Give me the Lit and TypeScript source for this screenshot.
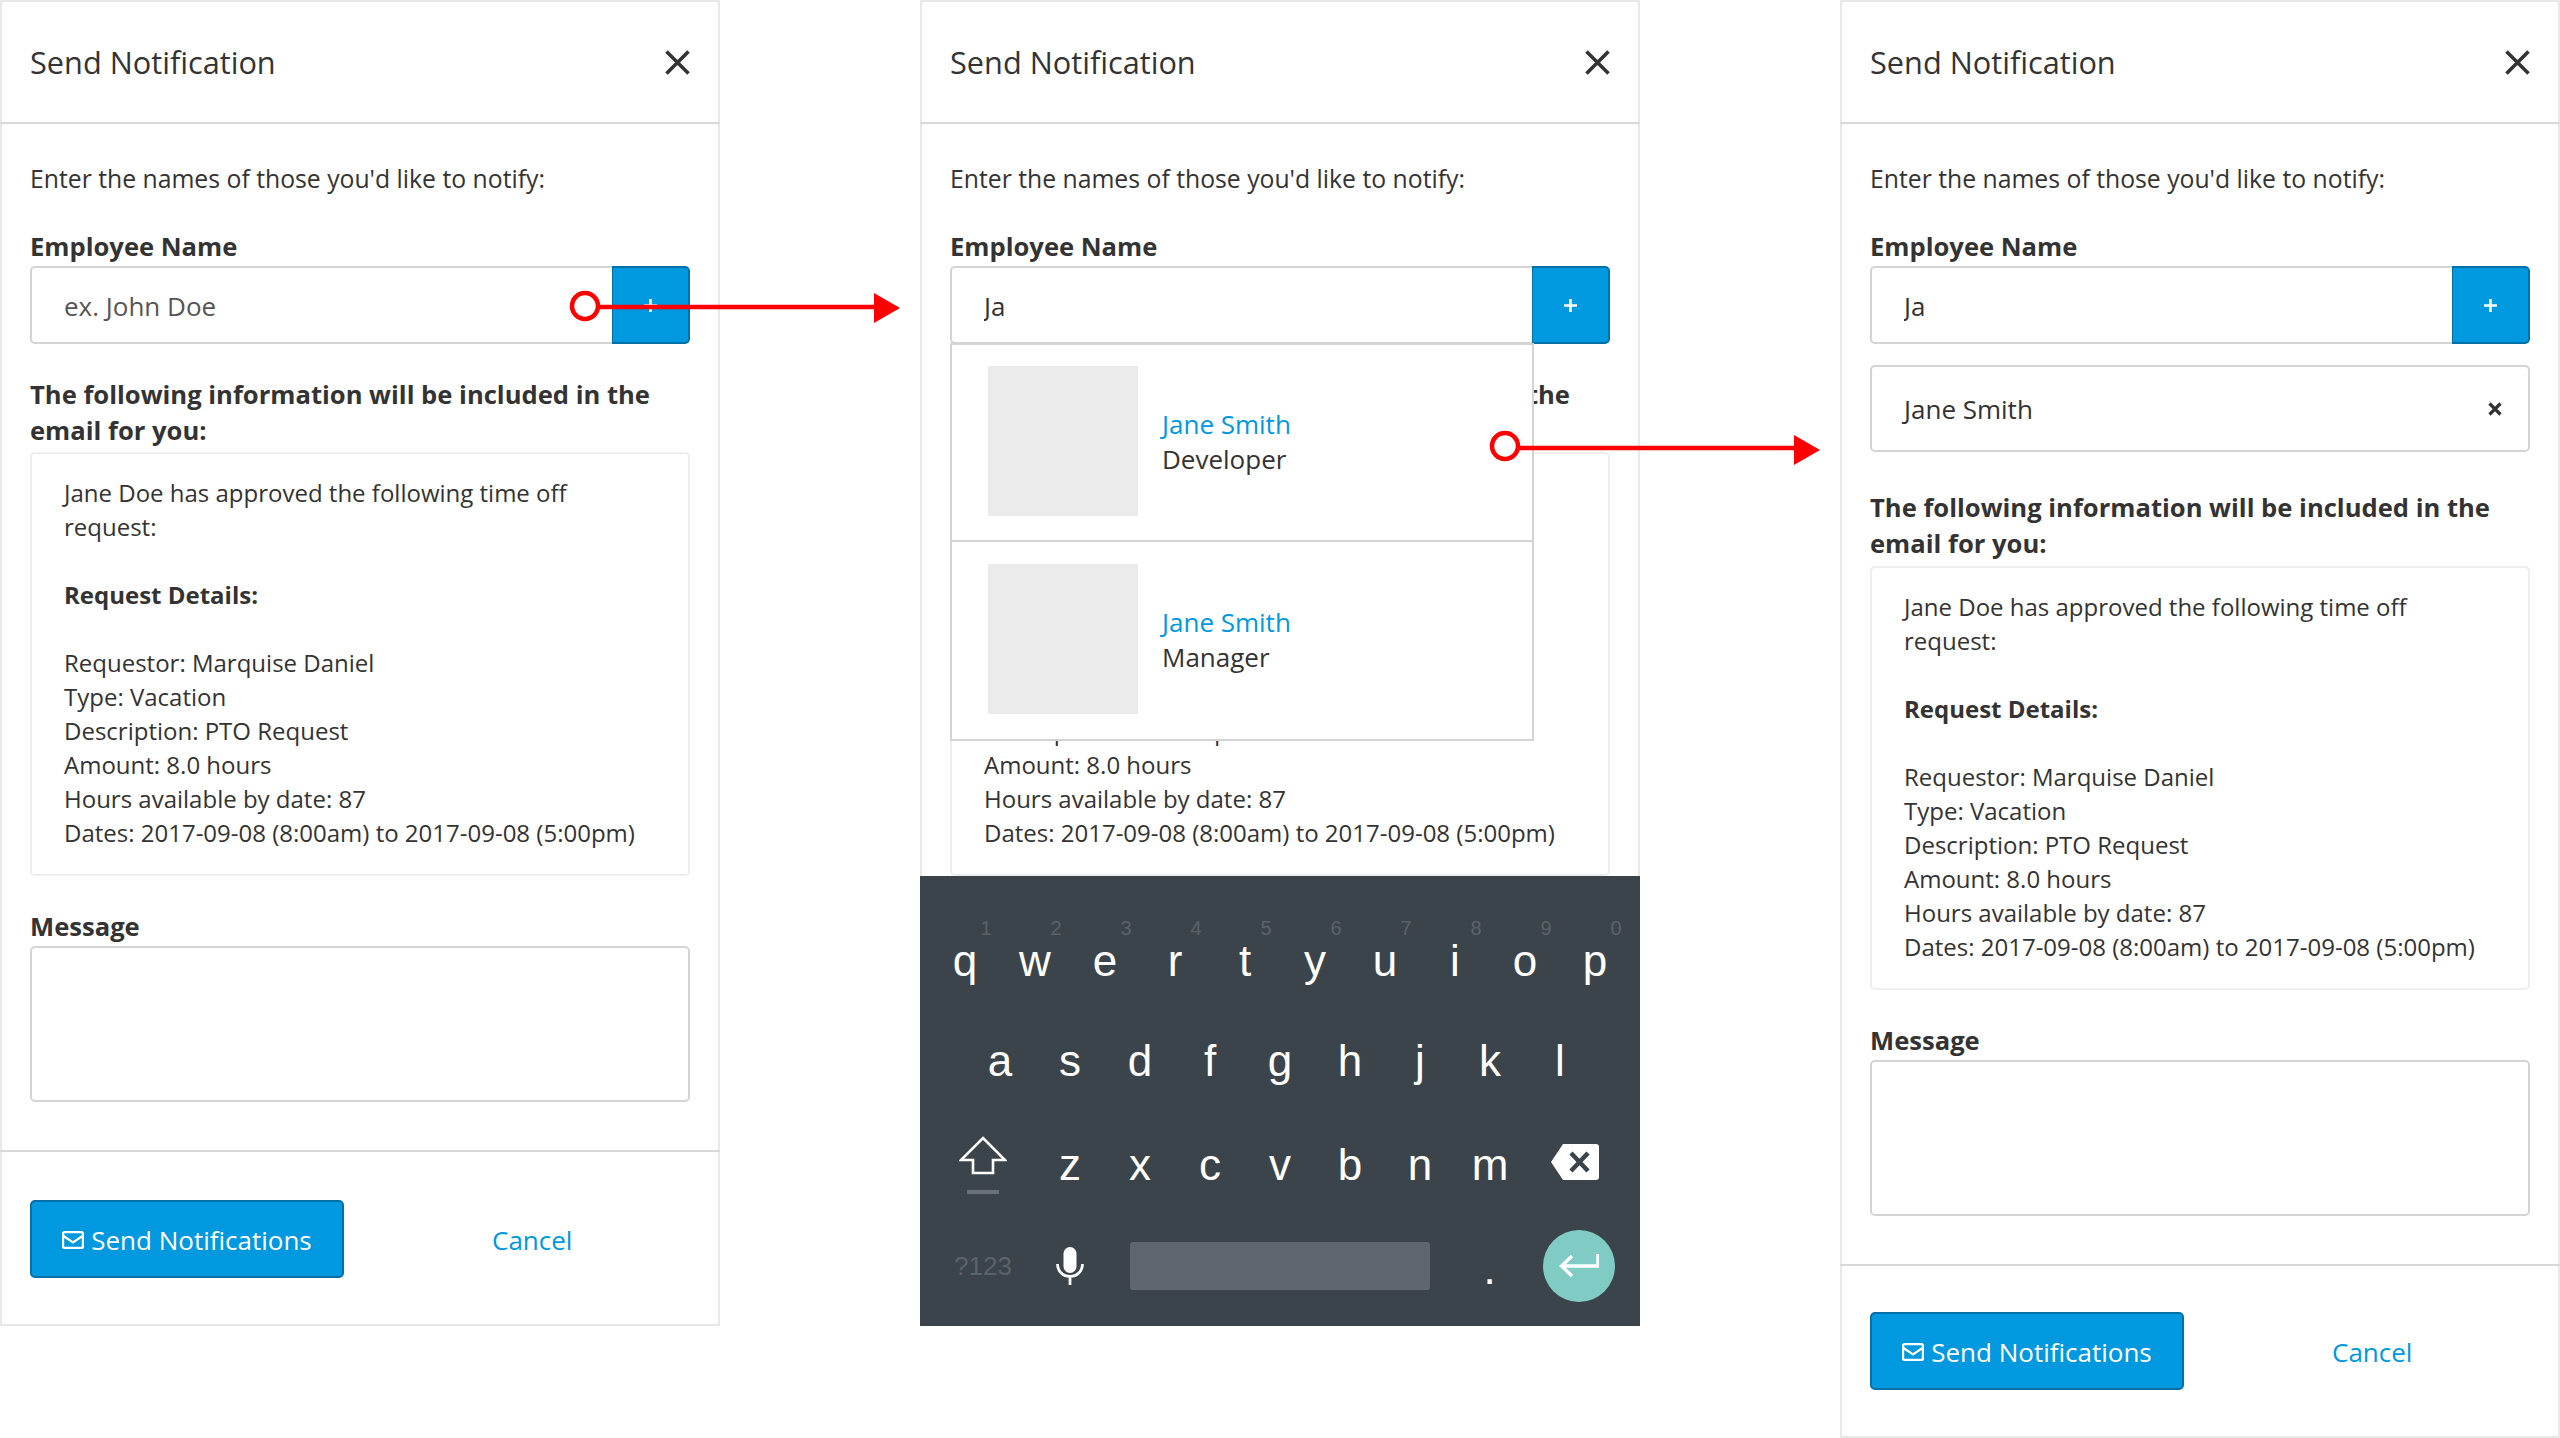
import { LitElement, html, css, svg } from "lit";
import { customElement, property } from "lit/decorators.js";

const FIRST = "qwertyuiop".split("");
const NUMS = "1234567890".split("");
const SECOND = "asdfghjkl".split("");
const THIRD = "zxcvbnm".split("");

@customElement("virtual-keyboard")
class VirtualKeyboard extends LitElement {
  static styles = css`
    :host { display: block; background: #3c444b; height: 450px; box-sizing: border-box; padding: 40px 10px 0; color: #fff; font-family: "Liberation Sans", Arial, sans-serif; }
    .row { display: flex; height: 98px; align-items: center; }
    .row.first { height: 94px; align-items: flex-start; }
    .row.second { height: 102px; padding-left: 35px; }
    .row.third { height: 105px; }
    .key { width: 70px; text-align: center; font-size: 44px; line-height: 50px; flex: none; }
    .first .key { position: relative; padding-top: 20px; }
    .num { position: absolute; top: 0; left: 21px; right: -21px; font-size: 20px; line-height: 24px; color: #5b6269; }
    .wide { width: 105px; display: flex; flex-direction: column; align-items: center; flex: none; }
    .shift-bar { width: 32px; height: 4px; background: #6b7279; margin-top: 15px; }
    .back { margin: -5px 0 0 -5px; }
    .sym { width: 106px; flex: none; text-align: center; font-size: 26px; color: #5b6269; }
    .mic { width: 68px; flex: none; display: flex; justify-content: center; }
    .space { width: 300px; height: 48px; margin-left: 26px; background: #5f666d; border-radius: 3px; flex: none; }
    .dot { width: 113px; flex: none; text-align: center; font-size: 44px; line-height: 50px; padding: 6px 0 0 6px; box-sizing: border-box; }
    .enter { width: 72px; height: 72px; border-radius: 50%; background: #80cbc4; display: flex; align-items: center; justify-content: center; flex: none; }
    svg { display: block; }
  `;
  render() {
    return html`
      <div class="row first">
        ${FIRST.map((k, i) => html`<div class="key"><span class="num">${NUMS[i]}</span>${k}</div>`)}
      </div>
      <div class="row second">${SECOND.map((k) => html`<div class="key">${k}</div>`)}</div>
      <div class="row third">
        <div class="wide">
          <svg width="48" height="39" viewBox="0 0 48 39"><path d="M24 2 46 24H34V37H14V24H2Z" fill="none" stroke="#fff" stroke-width="2.6"/></svg>
          <div class="shift-bar"></div>
        </div>
        ${THIRD.map((k) => html`<div class="key">${k}</div>`)}
        <div class="wide">
          <svg class="back" width="48" height="36" viewBox="0 0 48 36"><path d="M12 0H45a3 3 0 0 1 3 3V33a3 3 0 0 1-3 3H12L0 18Z" fill="#fff"/><path d="M20 9 37 27M37 9 20 27" stroke="#3c444b" stroke-width="4.5"/></svg>
        </div>
      </div>
      <div class="row">
        <div class="sym">?123</div>
        <div class="mic">
          <svg width="28" height="38" viewBox="0 0 28 38"><rect x="7.5" y="0" width="13" height="26" rx="6.5" fill="#fff"/><path d="M1.5 17C1.5 24.5 7 29.5 14 29.5S26.5 24.5 26.5 17M14 29.5V38" fill="none" stroke="#fff" stroke-width="2.8"/></svg>
        </div>
        <div class="space"></div>
        <div class="dot">.</div>
        <div class="enter">
          <svg width="40" height="24" viewBox="0 0 40 24"><path d="M39 0V12H3M13 2 2.500 12 13 22" fill="none" stroke="#fff" stroke-width="3.400"/></svg>
        </div>
      </div>
    `;
  }
}

@customElement("notify-panel")
class NotifyPanel extends LitElement {
  @property() value = "";
  @property({ type: Boolean }) suggest = false;
  @property({ type: Boolean }) keyboard = false;
  @property() chip = "";

  static styles = css`
    :host { display: block; width: 720px; box-sizing: border-box; flex: none; position: relative; border: 2px solid #e8e8e8; background: #fff; color: #333; font-family: "Open Sans", sans-serif; font-size: 26px; line-height: 34px; }
    * { box-sizing: border-box; }
    .header { height: 122px; border-bottom: 2px solid #d8d8d8; display: flex; align-items: center; justify-content: space-between; margin: 0 -2px; padding: 0 30px; }
    .title { font-size: 30.7px; }
    .body { padding: 38px 28px 48px; }
    .intro { margin-bottom: 34px; font-size: 24.75px; }
    .label { font-weight: 700; font-size: 25.6px; margin-bottom: 2px; }
    .group { display: flex; height: 78px; position: relative; }
    .input { flex: 1; border: 2px solid #d4d4d4; border-right: 0; border-radius: 5px 0 0 5px; padding: 2px 32px 0; font: inherit; color: #333; background: #fff; outline: none; min-width: 0; }
    .input::placeholder { color: #555; opacity: 1; }
    .add { width: 78px; flex: none; background: #0099e0; border: 2px solid #0071a8; border-left-width: 1px; border-radius: 0 5px 5px 0; display: flex; align-items: center; justify-content: center; padding: 0; }
    .chip { margin-top: 21px; height: 87px; border: 2px solid #d4d4d4; border-radius: 5px; display: flex; align-items: center; justify-content: space-between; padding: 0 26px 0 32px; }
    .heading { font-weight: 700; font-size: 25.6px; line-height: 36px; margin-top: 33px; }
    .chip + .heading { margin-top: 38px; }
    .details { margin-top: 3px; border: 2px solid #eee; border-radius: 5px; padding: 22px 32px; height: 424px; font-size: 24px; }
    .chip ~ .details { margin-top: 4px; }
    .details p { margin: 0; }
    .details b { font-weight: 700; }
    .msg { margin-top: 34px; }
    .area { display: block; margin: 0; width: 100%; height: 156px; border: 2px solid #d4d4d4; border-radius: 5px; background: #fff; resize: none; outline: none; }
    .footer { border-top: 2px solid #d8d8d8; margin: 0 -2px; padding: 48px 30px 46px; display: flex; align-items: center; }
    :host([chip]) .footer { padding-top: 46px; }
    .send { width: 314px; height: 78px; background: #0099e0; border: 2px solid #0071a8; border-radius: 5px; color: #fff; font: inherit; display: flex; align-items: center; justify-content: center; gap: 7px; padding: 2px 0 0; }
    .cancel { color: #0099e0; margin-left: 148px; padding-top: 2px; }
    .drop { position: absolute; left: 0; top: 77px; width: 584px; background: #fff; border: 2px solid #d4d4d4; z-index: 2; }
    .item { display: flex; align-items: center; gap: 24px; padding: 21px 36px 24px; }
    .item + .item { border-top: 2px solid #d4d4d4; padding: 22px 36px 25px; }
    .thumb { width: 150px; height: 150px; background: #ebebeb; flex: none; }
    .who { padding-top: 2px; }
    .name { color: #0099e0; display: block; line-height: 35px; }
    .role { display: block; line-height: 35px; }
    .kb { position: absolute; left: -2px; right: -2px; bottom: -2px; z-index: 3; }
    svg { display: block; }
  `;

  private plus() {
    return html`<svg width="13" height="13" viewBox="0 0 13 13"><path d="M6.500 0V13M0 6.500H13" stroke="#fff" stroke-width="2.600"/></svg>`;
  }

  render() {
    return html`
      <div class="header">
        <span class="title">Send Notification</span>
        <svg width="25" height="25" viewBox="0 0 25 25"><path d="M1.500 1.500 23.500 23.500M23.500 1.500 1.500 23.500" stroke="#333" stroke-width="3.600"/></svg>
      </div>
      <div class="body">
        <div class="intro">Enter the names of those you'd like to notify:</div>
        <div class="label">Employee Name</div>
        <div class="group">
          <input class="input" .value=${this.value} placeholder="ex. John Doe" />
          <button class="add">${this.plus()}</button>
          ${this.suggest
            ? html`<div class="drop">
                ${["Developer", "Manager"].map(
                  (r) => html`<div class="item"><div class="thumb"></div><div class="who"><span class="name">Jane Smith</span><span class="role">${r}</span></div></div>`
                )}
              </div>`
            : ""}
        </div>
        ${this.chip
          ? html`<div class="chip"><span>${this.chip}</span>
              <svg width="14" height="14" viewBox="0 0 14 14"><path d="M1.500 1.500 12.500 12.500M12.500 1.500 1.500 12.500" stroke="#333" stroke-width="3.200"/></svg></div>`
          : ""}
        <div class="heading">The following information will be included in the email for you:</div>
        <div class="details">
          <p>Jane Doe has approved the following time off request:</p>
          <p>&nbsp;</p>
          <p><b>Request Details:</b></p>
          <p>&nbsp;</p>
          <p>Requestor: Marquise Daniel</p>
          <p>Type: Vacation</p>
          <p>Description: PTO Request</p>
          <p>Amount: 8.0 hours</p>
          <p>Hours available by date: 87</p>
          <p>Dates: 2017-09-08 (8:00am) to 2017-09-08 (5:00pm)</p>
        </div>
        <div class="label msg">Message</div>
        <textarea class="area"></textarea>
      </div>
      <div class="footer">
        <button class="send">
          <svg width="22" height="18" viewBox="0 0 22 18"><rect x="1.100" y="1.100" width="19.800" height="15.800" rx="1.500" fill="none" stroke="#fff" stroke-width="2.200"/><path d="M1.500 5 11 11.500 20.500 5" fill="none" stroke="#fff" stroke-width="2.200"/></svg>
          <span>Send Notifications</span>
        </button>
        <span class="cancel">Cancel</span>
      </div>
      ${this.keyboard ? html`<virtual-keyboard class="kb"></virtual-keyboard>` : ""}
    `;
  }
}

@customElement("app-root")
class AppRoot extends LitElement {
  static styles = css`
    :host { display: block; width: 2560px; height: 1438px; position: relative; overflow: hidden; background: #fff; }
    .row { display: flex; gap: 200px; align-items: flex-start; }
    .overlay { position: absolute; left: 0; top: 0; z-index: 5; pointer-events: none; }
  `;
  private arrow(cx: number, cy: number, ly: number, tipStart: number, tipY: number) {
    return svg`
      <circle cx=${cx} cy=${cy} r="13" fill="none" stroke="#ff0000" stroke-width="4.500"/>
      <path d="M${cx + 13} ${ly}H${tipStart}" stroke="#ff0000" stroke-width="4.500"/>
      <path d="M${tipStart} ${tipY - 15}L${tipStart + 26} ${tipY}L${tipStart} ${tipY + 15}Z" fill="#ff0000"/>
    `;
  }
  render() {
    return html`
      <div class="row">
        <notify-panel></notify-panel>
        <notify-panel value="Ja" suggest keyboard></notify-panel>
        <notify-panel value="Ja" chip="Jane Smith"></notify-panel>
      </div>
      <svg class="overlay" width="2560" height="1438" viewBox="0 0 2560 1438">
        ${this.arrow(585, 306, 307, 874, 308)}
        ${this.arrow(1505, 446, 448, 1794, 450)}
      </svg>
    `;
  }
}
